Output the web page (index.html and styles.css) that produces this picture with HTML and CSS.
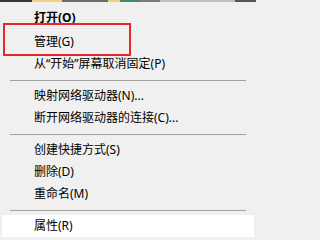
FILE: index.html
```html
<!DOCTYPE html>
<html lang="zh-CN">
<head>
<meta charset="utf-8">
<link rel="stylesheet" href="styles.css">
</head>
<body>
<div class="strip">
  <span class="s1"></span><span class="s2"></span><span class="s3"></span><span class="s4"></span><span class="s5"></span><span class="s6"></span><span class="s7"></span><span class="s8"></span>
</div>
<div class="menu">
  <div class="item bold first">打开(O)</div>
  <div class="item">管理(G)</div>
  <div class="item">从“开始”屏幕取消固定(P)</div>
  <div class="sep"></div>
  <div class="item">映射网络驱动器(N)...</div>
  <div class="item">断开网络驱动器的连接(C)...</div>
  <div class="sep"></div>
  <div class="item">创建快捷方式(S)</div>
  <div class="item">删除(D)</div>
  <div class="item">重命名(M)</div>
  <div class="sep"></div>
  <div class="item hover">属性(R)</div>
</div>
<div class="annot"></div>
</body>
</html>
```

FILE: styles.css
```css
html {
  margin: 0;
  padding: 0;
  background: #f0f0f0;
}
body {
  margin: 0;
  padding: 0;
  width: 256px;
  height: 238px;
  overflow: hidden;
  position: relative;
  background: #f0f0f0;
  font-family: "Noto Sans", "Noto Sans CJK SC", sans-serif;
  font-size: 12px;
  color: #000;
}
.strip {
  display: flex;
  height: 2px;
}
.strip span { display: block; height: 2px; }
.s1 { width: 32px; background: #3e3139; }
.s2 { width: 30px; background: #f2d283; }
.s3 { width: 46px; background: #6b6b6b; }
.s4 { width: 12px; background: #f0d27a; }
.s5 { width: 20px; background: #3f8a67; }
.s6 { width: 20px; background: #7a7a7a; }
.s7 { width: 75px; background: #b9c0c6; }
.s8 { width: 21px; background: #555555; }
.menu {
  display: flex;
  flex-direction: column;
  padding-top: 4px;
}
.item {
  height: 22px;
  line-height: 22px;
  padding-left: 34px;
  white-space: nowrap;
}
.first {
  margin-top: 1px;
  margin-bottom: 2px;
}
.bold { font-weight: bold; }
.sep {
  height: 0;
  margin: 5px 10px 4px 10px;
  border-top: 1px solid #a0a0a0;
}
.hover {
  background: #ffffff;
  margin: 0 2px;
  padding-left: 32px;
}
.annot {
  position: absolute;
  left: 3px;
  top: 23px;
  width: 124px;
  height: 29px;
  border: 2px solid #e8262b;
}
```
